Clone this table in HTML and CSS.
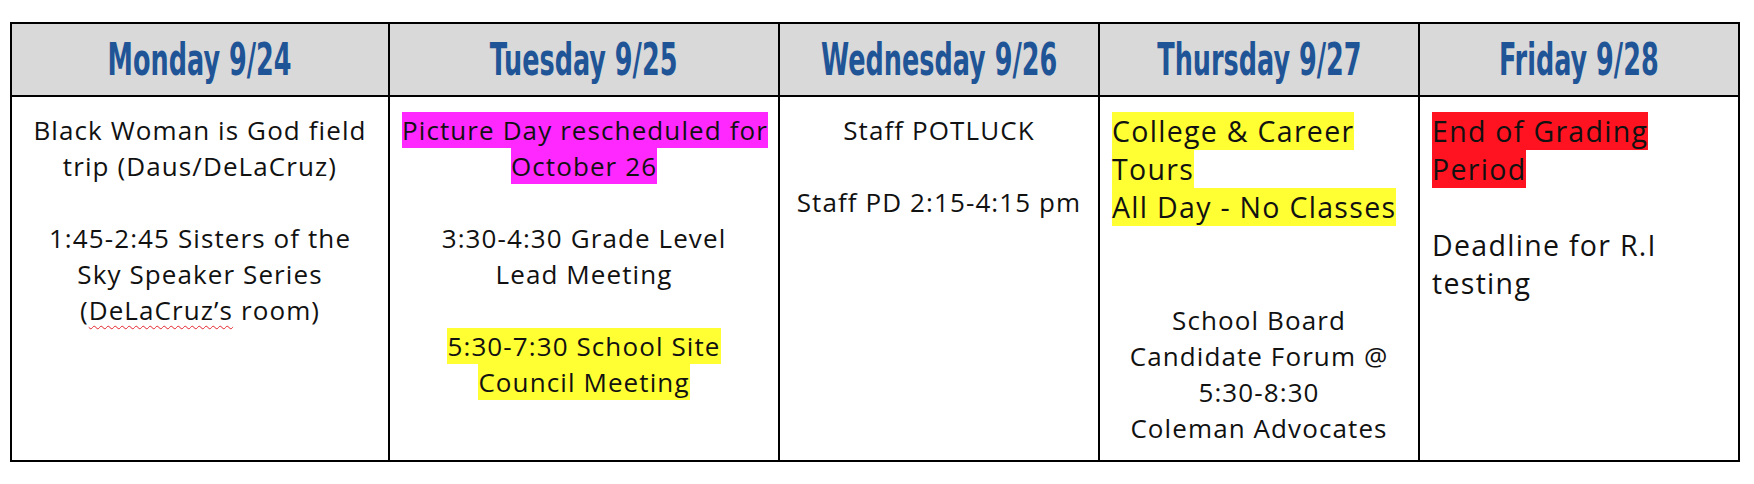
FILE: index.html
```html
<!DOCTYPE html>
<html lang="en">
<head>
<meta charset="utf-8">
<title>Week of 9/24</title>
<link rel="stylesheet" href="styles.css">
</head>
<body>
<div class="calendar">
  <div class="head"><span class="day">Monday 9/24</span></div>
  <div class="head"><span class="day">Tuesday 9/25</span></div>
  <div class="head"><span class="day">Wednesday 9/26</span></div>
  <div class="head"><span class="day">Thursday 9/27</span></div>
  <div class="head"><span class="day">Friday 9/28</span></div>

  <div class="cell center">
    <p class="ev">Black Woman is God field<br>trip (Daus/DeLaCruz)</p>
    <p class="ev">1:45-2:45 Sisters of the<br>Sky Speaker Series<br>(<span class="spell">DeLaCruz’s</span> room)</p>
  </div>

  <div class="cell center">
    <div class="ev">
      <div class="line"><span class="hl magenta">Picture Day rescheduled for</span></div>
      <div class="line"><span class="hl magenta">October 26</span></div>
    </div>
    <p class="ev">3:30-4:30 Grade Level<br>Lead Meeting</p>
    <div class="ev">
      <div class="line"><span class="hl yellow">5:30-7:30 School Site</span></div>
      <div class="line"><span class="hl yellow">Council Meeting</span></div>
    </div>
  </div>

  <div class="cell center">
    <p class="ev">Staff POTLUCK</p>
    <p class="ev">Staff PD 2:15-4:15 pm</p>
  </div>

  <div class="cell">
    <div class="ev big">
      <div class="line"><span class="hl yellow">College &amp; Career</span></div>
      <div class="line"><span class="hl yellow">Tours</span></div>
      <div class="line"><span class="hl yellow">All Day - No Classes</span></div>
    </div>
    <p class="ev center late">School Board<br>Candidate Forum @<br>5:30-8:30<br>Coleman Advocates</p>
  </div>

  <div class="cell">
    <div class="ev big">
      <div class="line"><span class="hl red">End of Grading</span></div>
      <div class="line"><span class="hl red">Period</span></div>
    </div>
    <p class="ev big">Deadline for R.I<br>testing</p>
  </div>
</div>
</body>
</html>
```

FILE: styles.css
```css
html, body {
  margin: 0;
  padding: 0;
  background: #ffffff;
}

body {
  font-family: "Open Sans", "Lato", sans-serif;
  color: #111111;
}

.calendar {
  display: grid;
  grid-template-columns: 376px 388px 318px 318px 318px;
  grid-template-rows: 71px 363px;
  gap: 2px;
  width: max-content;
  margin: 22px 0 0 10px;
  border: 2px solid #000000;
  background: #000000;
}

.head {
  background: #d9d9d9;
  display: flex;
  align-items: center;
  justify-content: center;
}

.day {
  display: inline-block;
  font-family: "Liberation Sans Narrow", "DejaVu Sans Condensed", "Roboto", sans-serif;
  font-weight: 700;
  font-size: 44px;
  line-height: 1;
  color: #1f5497;
  transform: scaleX(0.645);
  white-space: nowrap;
}

.cell {
  background: #ffffff;
  padding: 15px 12px 0;
  font-size: 26px;
  line-height: 36px;
  letter-spacing: 1.1px;
  white-space: nowrap;
}

.center {
  text-align: center;
}

.ev {
  margin: 0;
}

.ev + .ev {
  margin-top: 36px;
}

.big {
  font-size: 28.5px;
  line-height: 38px;
  letter-spacing: 1.3px;
}

.big + .big {
  margin-top: 38px;
}

.ev.late {
  margin-top: 76px;
}

.line {
  display: block;
}

.hl {
  display: inline-block;
}

.magenta {
  background: #ff28ff;
}

.yellow {
  background: #ffff33;
}

.red {
  background: #ff1320;
}

.spell {
  text-decoration: underline wavy #e3232c;
  text-decoration-thickness: 1px;
  text-underline-offset: 5px;
  text-decoration-skip-ink: none;
}
```
